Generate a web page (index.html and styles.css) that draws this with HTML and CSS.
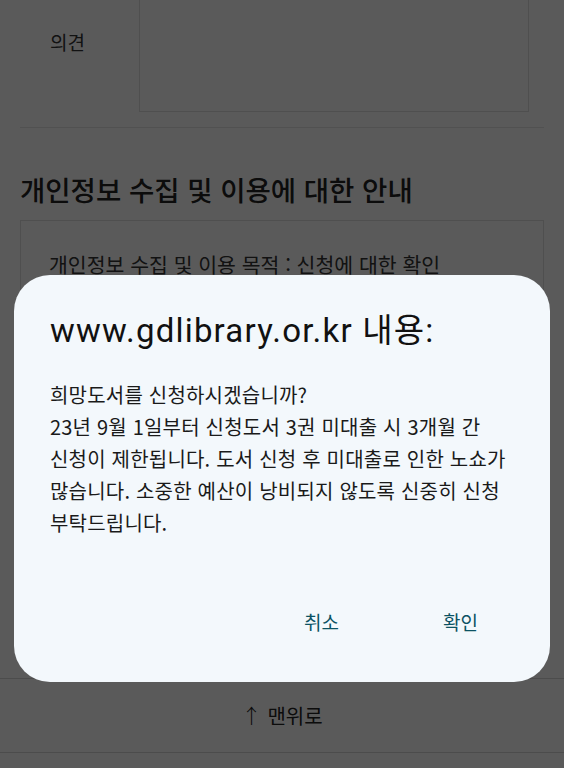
FILE: index.html
```html
<!DOCTYPE html>
<html lang="ko">
  <head>
    <meta charset="UTF-8" />
    <meta name="viewport" content="width=device-width, initial-scale=1.0" />
    <title>희망도서 신청</title>

    <link rel="stylesheet" href="styles.css">
  </head>

  <body>
    <main class="page">
      <div class="form-row">
        <span class="form-label">의견</span>
        <div class="form-textarea"></div>
      </div>

      <h2 class="section-title">개인정보 수집 및 이용에 대한 안내</h2>
      <div class="notice">
        <p>개인정보 수집 및 이용 목적 : 신청에 대한 확인</p>
      </div>

      <footer class="to-top">
        <span class="arrow">↑</span> 맨위로
      </footer>
    </main>

    <!-- alert() -->
    <div class="overlay">
      <div class="dialog">
        <h1 class="dialog-title">www.gdlibrary.or.kr 내용:</h1>
        <p class="dialog-text">희망도서를 신청하시겠습니까?<br>23년 9월 1일부터 신청도서 3권 미대출 시 3개월 간 신청이 제한됩니다. 도서 신청 후 미대출로 인한 노쇼가 많습니다. 소중한 예산이 낭비되지 않도록 신중히 신청 부탁드립니다.</p>
        <div class="dialog-actions">
          <button class="dialog-btn">취소</button>
          <button class="dialog-btn">확인</button>
        </div>
      </div>
    </div>
  </body>
</html>
```

FILE: styles.css
```css
body {
  margin: 0;
  background-color: #fff;
  color: #333;
  font-family: "Noto Sans CJK KR", "Noto Sans", sans-serif;
  overflow: hidden;
}

.form-row {
  display: flex;
  align-items: center;
  margin: -30px 20px 0;
  padding-bottom: 15px;
  border-bottom: 1px solid #e4e4e4;
}
.form-label {
  width: 89px;
  padding-left: 30px;
  font-size: 19px;
}
.form-textarea {
  flex: 1;
  height: 142px;
  margin-right: 15px;
  border: 1px solid #e0e0e0;
  box-sizing: border-box;
}

.section-title {
  margin: 44px 20px 13px;
  font-size: 27.5px;
  font-weight: 500;
  line-height: 35px;
  color: #222;
}

.notice {
  height: 340px;
  box-sizing: border-box;
  margin: 0 20px;
  padding: 28px;
  border: 1px solid #e0e0e0;
}
.notice p {
  margin: 0;
  font-size: 20.5px;
  line-height: 30px;
}

.to-top {
  display: flex;
  justify-content: center;
  align-items: center;
  gap: 6px;
  height: 73px;
  margin-top: 118px;
  border-top: 1px solid #d6d6d6;
  border-bottom: 1px solid #d6d6d6;
  font-size: 20px;
  color: #222;
}
.to-top .arrow {
  font-weight: 300;
}

/* alert */
.overlay {
  position: fixed;
  top: 0;
  left: 0;
  width: 100vw;
  height: 100vh;
  box-sizing: border-box;
  padding: 0 14px 86px;
  background-color: rgba(0, 0, 0, 0.647);
  display: flex;
  align-items: flex-end;
  justify-content: center;
}

.dialog {
  width: 100%;
  padding: 34px 36px 36px;
  box-sizing: border-box;
  background-color: #f3f8fc;
  border-radius: 36px;
}
.dialog-title {
  margin: 0;
  font-family: Roboto, "Noto Sans CJK KR", sans-serif;
  font-size: 33px;
  font-weight: 400;
  letter-spacing: 1.2px;
  line-height: 44px;
  color: #111;
}
.dialog-text {
  margin: 26px 0 0;
  font-size: 20px;
  letter-spacing: 0.2px;
  line-height: 32px;
  color: #1a1a1a;
  word-break: keep-all;
}
.dialog-actions {
  display: flex;
  justify-content: flex-end;
  gap: 72px;
  margin-top: 59px;
  padding-right: 20px;
}
.dialog-btn {
  padding: 12px 16px;
  border: 0;
  background: none;
  font-family: inherit;
  font-size: 19px;
  line-height: 24px;
  color: #0b5263;
}
```
